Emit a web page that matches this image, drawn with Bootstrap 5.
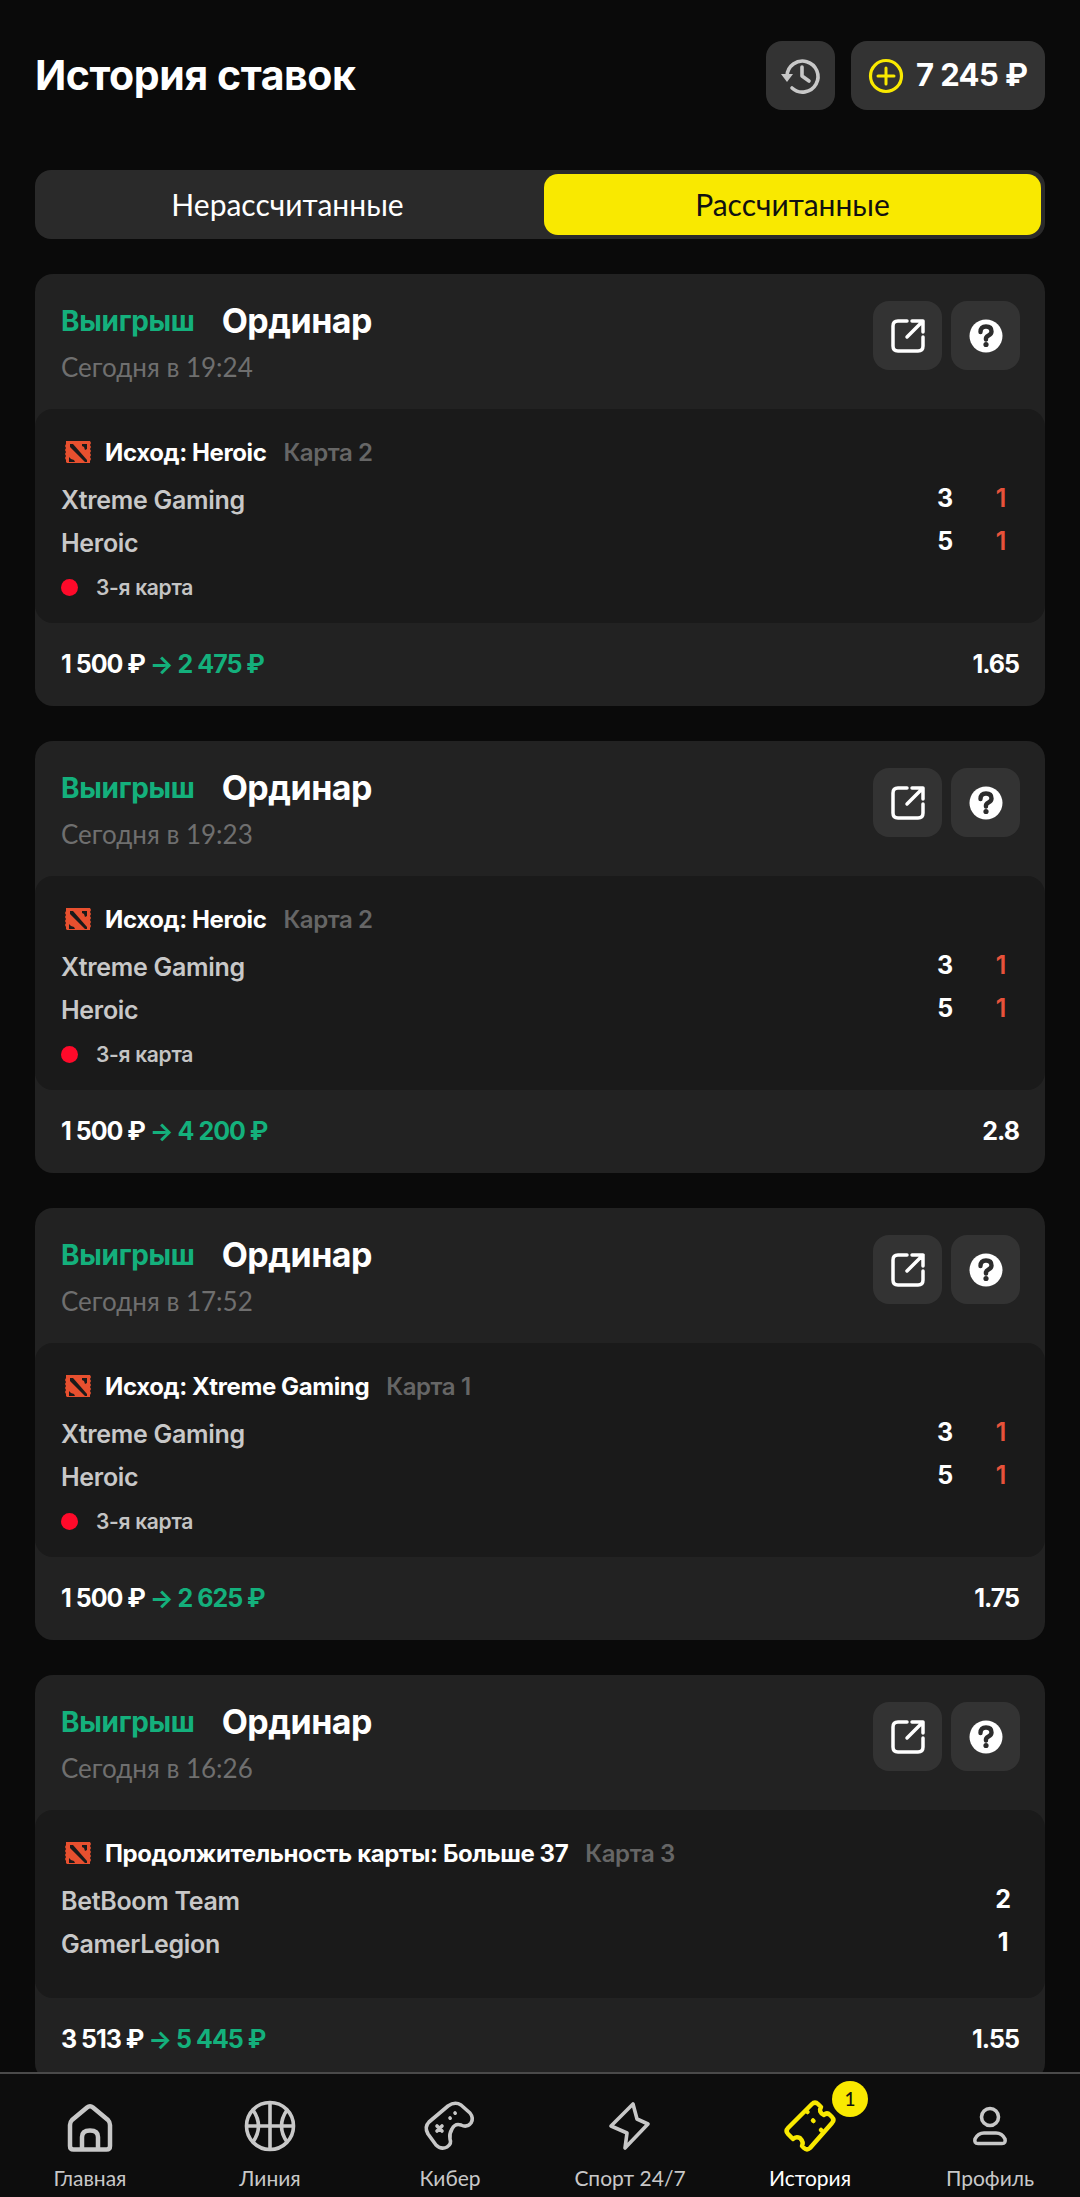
<!DOCTYPE html>
<html lang="ru">
<head>
  <meta charset="UTF-8" />
  <meta name="viewport" content="width=device-width, initial-scale=1.0" />
  <title>История ставок</title>
  <link href="https://cdn.jsdelivr.net/npm/bootstrap@5.3.0/dist/css/bootstrap.min.css" rel="stylesheet" />
  <style>
    body { background: #0a0a0a; color: #fff; font-family: "Inter", "Noto Sans", sans-serif; height: 2197px; overflow: hidden; }
    .page-wrap { padding: 41px 35px 0; }
    .page-title { font-size: 41px; font-weight: 700; letter-spacing: -.4px; line-height: 69px; margin: 0; }
    .square-btn { width: 69px; height: 69px; background: #333; border: 0; border-radius: 16px; padding: 0; }
    .square-btn:hover, .square-btn:active { background: #333 !important; }
    .balance-btn { height: 69px; width: 194px; background: #333; border: 0; border-radius: 16px; color: #fff; font-size: 31px; font-weight: 700; padding: 0 0 0 17px; gap: 12px; letter-spacing: -.6px; }
    .balance-btn:hover { background: #333; color: #fff; }
    .tab-bar { margin-top: 60px; height: 69px; background: #2a2a2a; border-radius: 16px; padding: 4px; gap: 8px; }
    .tab-btn { flex: 1 1 0; border: 0; border-radius: 14px; font-family: "Lato", "Noto Sans", sans-serif; font-size: 30px; color: #fff; padding: 0; }
    .tab-btn.is-active { background: #f9e900; color: #111; }
    .bet-card { background: #222; border: 0; border-radius: 18px; margin-top: 35px; color: #fff; }
    .bet-head { height: 135px; padding: 27px 25px 0 26px; }
    .bet-status { color: #14b07c; font-size: 28px; font-weight: 700; letter-spacing: -.3px; line-height: 40px; margin-right: 27px; }
    .bet-type { font-size: 34px; font-weight: 700; letter-spacing: -.5px; line-height: 40px; }
    .bet-date { font-family: "Lato", "Noto Sans", sans-serif; font-size: 26px; color: #6f6f6f; line-height: 34px; margin-top: 9px; }
    .head-actions { gap: 9px; }
    .bet-body { background: #1a1a1a; border-radius: 18px; padding: 27px 26px 11px; }
    .bet-body.no-map { padding-bottom: 32px; }
    .market-row { height: 34px; font-size: 24px; font-weight: 700; letter-spacing: -.4px; padding-left: 4px; }
    .market-row svg { margin-right: 14px; }
    .market-map { color: #666; font-weight: 600; margin-left: 17px; }
    .team-row { height: 43px; font-size: 25px; font-weight: 600; letter-spacing: -.3px; color: #c8c8c8; padding-right: 6px; }
    .teams { padding-top: 9px; }
    .score { width: 20px; text-align: center; color: #fff; font-weight: 700; margin-bottom: 3px; }
    .score-live { color: #e8523a; font-weight: 600; margin-left: 36px; margin-right: 2px; }
    .map-row { height: 47px; font-size: 21px; font-weight: 600; letter-spacing: -.3px; color: #c4c4c4; gap: 18px; padding-bottom: 2px; }
    .live-dot { width: 17px; height: 17px; border-radius: 50%; background: #ff0a2a; }
    .bet-foot { height: 83px; padding: 0 26px; font-size: 25px; font-weight: 700; letter-spacing: -1px; }
    .win-sum { color: #14b07c; }
    .tab-nav { height: 125px; background: #0d0d0d; border-top: 2px solid #4a4a4a; }
    .tab-item { width: 180px; padding-top: 22px; color: #c8c8c8; font-family: "Lato", "Noto Sans", sans-serif; font-size: 21px; line-height: 24px; position: relative; }
    .tab-item.is-current { color: #fff; }
    .tab-item svg { margin-bottom: 10px; }
    .nav-badge { position: absolute; top: 7px; left: 112px; width: 36px; height: 36px; border-radius: 50%; background: #f9e900; color: #111; font-size: 19px; font-weight: 500; line-height: 36px; text-align: center; }
    .ic { fill: none; stroke: #c8c8c8; stroke-width: 4.5; stroke-linecap: round; stroke-linejoin: round; }
    .ic-thin { stroke-width: 3.6; }
    .ic-active { stroke: #f9e900; }
  </style>
</head>
<body>
  <svg width="0" height="0" class="position-absolute">
    <symbol id="i-dota" viewBox="0 0 26 24">
      <path fill="#e8502f" d="M1 0h24l1 2-1 2 1 2-1 2 1 2-1 2 1 2-1 2 1 2-1 2 0 2H2l-1-1 0-2-1-2 1-2-1-2 1-2-1-2 1-2-1-2 1-2Z"/>
      <path fill="#1a1a1a" d="M5 3h3l14 16v2h-2L5 6ZM17 3h5v5l-2 1-1-3-2-1ZM4 16l2 2 3 1 1 2H4Z"/>
    </symbol>
    <symbol id="i-share" viewBox="0 0 40 40">
      <path fill="none" stroke="#fff" stroke-width="3.5" stroke-linecap="round" stroke-linejoin="round" d="M19 5H10Q5 5 5 10V30Q5 35 10 35H30Q35 35 35 30V21M19 21L35 5M24 5H35V16"/>
    </symbol>
    <symbol id="i-help" viewBox="0 0 40 40">
      <circle cx="20" cy="20" r="16.5" fill="#fff"/>
      <path fill="none" stroke="#2c2c2c" stroke-width="4.4" stroke-linecap="round" stroke-linejoin="round" d="M14.5 16Q14.5 10.5 20 10.5T25.5 15.5Q25.5 18 22.5 19.5T20 23.5"/>
      <circle cx="20" cy="28.5" r="2.6" fill="#2c2c2c"/>
    </symbol>
  </svg>

  <main class="page-wrap">
    <header class="d-flex justify-content-between align-items-center">
      <h1 class="page-title">История ставок</h1>
      <div class="d-flex" style="gap:16px">
        <button class="btn square-btn d-flex align-items-center justify-content-center" aria-label="История">
          <svg width="42" height="42" viewBox="0 0 42 42"><path fill="none" stroke="#c8c8c8" stroke-width="3.6" stroke-linecap="round" stroke-linejoin="round" d="M7 21A15.5 15.5 0 1 1 12 33M22 12V21L29 26"/><path fill="#c8c8c8" d="M1 19H13L7 27Z"/></svg>
        </button>
        <button class="btn balance-btn d-flex align-items-center">
          <svg width="36" height="36" viewBox="0 0 36 36"><circle cx="18" cy="18" r="15.5" fill="none" stroke="#f9e900" stroke-width="3.2"/><path fill="none" stroke="#f9e900" stroke-width="3" stroke-linecap="round" d="M18 10V26M10 18H26"/></svg>
          <span>7 245 ₽</span>
        </button>
      </div>
    </header>

    <div class="tab-bar d-flex">
      <button class="btn tab-btn">Нерассчитанные</button>
      <button class="btn tab-btn is-active">Рассчитанные</button>
    </div>

    <!-- Ставка 1 -->
    <section class="card bet-card">
      <div class="bet-head d-flex justify-content-between">
        <div>
          <div class="d-flex"><span class="bet-status">Выигрыш</span><span class="bet-type">Ординар</span></div>
          <div class="bet-date">Сегодня в 19:24</div>
        </div>
        <div class="d-flex head-actions">
          <button class="btn square-btn d-flex align-items-center justify-content-center" aria-label="Поделиться"><svg width="40" height="40"><use href="#i-share"/></svg></button>
          <button class="btn square-btn d-flex align-items-center justify-content-center" aria-label="Справка"><svg width="40" height="40"><use href="#i-help"/></svg></button>
        </div>
      </div>
      <div class="bet-body">
        <div class="market-row d-flex align-items-center"><svg width="26" height="24"><use href="#i-dota"/></svg>Исход: Heroic<span class="market-map">Карта 2</span></div>
        <div class="teams">
          <div class="team-row d-flex align-items-center"><span class="flex-grow-1">Xtreme Gaming</span><span class="score">3</span><span class="score score-live">1</span></div>
          <div class="team-row d-flex align-items-center"><span class="flex-grow-1">Heroic</span><span class="score">5</span><span class="score score-live">1</span></div>
        </div>
        <div class="map-row d-flex align-items-center"><span class="live-dot"></span>3-я карта</div>
      </div>
      <div class="bet-foot d-flex justify-content-between align-items-center"><span>1 500 ₽ <span class="win-sum">→ 2 475 ₽</span></span><span>1.65</span></div>
    </section>

    <!-- Ставка 2 -->
    <section class="card bet-card">
      <div class="bet-head d-flex justify-content-between">
        <div>
          <div class="d-flex"><span class="bet-status">Выигрыш</span><span class="bet-type">Ординар</span></div>
          <div class="bet-date">Сегодня в 19:23</div>
        </div>
        <div class="d-flex head-actions">
          <button class="btn square-btn d-flex align-items-center justify-content-center" aria-label="Поделиться"><svg width="40" height="40"><use href="#i-share"/></svg></button>
          <button class="btn square-btn d-flex align-items-center justify-content-center" aria-label="Справка"><svg width="40" height="40"><use href="#i-help"/></svg></button>
        </div>
      </div>
      <div class="bet-body">
        <div class="market-row d-flex align-items-center"><svg width="26" height="24"><use href="#i-dota"/></svg>Исход: Heroic<span class="market-map">Карта 2</span></div>
        <div class="teams">
          <div class="team-row d-flex align-items-center"><span class="flex-grow-1">Xtreme Gaming</span><span class="score">3</span><span class="score score-live">1</span></div>
          <div class="team-row d-flex align-items-center"><span class="flex-grow-1">Heroic</span><span class="score">5</span><span class="score score-live">1</span></div>
        </div>
        <div class="map-row d-flex align-items-center"><span class="live-dot"></span>3-я карта</div>
      </div>
      <div class="bet-foot d-flex justify-content-between align-items-center"><span>1 500 ₽ <span class="win-sum">→ 4 200 ₽</span></span><span>2.8</span></div>
    </section>

    <!-- Ставка 3 -->
    <section class="card bet-card">
      <div class="bet-head d-flex justify-content-between">
        <div>
          <div class="d-flex"><span class="bet-status">Выигрыш</span><span class="bet-type">Ординар</span></div>
          <div class="bet-date">Сегодня в 17:52</div>
        </div>
        <div class="d-flex head-actions">
          <button class="btn square-btn d-flex align-items-center justify-content-center" aria-label="Поделиться"><svg width="40" height="40"><use href="#i-share"/></svg></button>
          <button class="btn square-btn d-flex align-items-center justify-content-center" aria-label="Справка"><svg width="40" height="40"><use href="#i-help"/></svg></button>
        </div>
      </div>
      <div class="bet-body">
        <div class="market-row d-flex align-items-center"><svg width="26" height="24"><use href="#i-dota"/></svg>Исход: Xtreme Gaming<span class="market-map">Карта 1</span></div>
        <div class="teams">
          <div class="team-row d-flex align-items-center"><span class="flex-grow-1">Xtreme Gaming</span><span class="score">3</span><span class="score score-live">1</span></div>
          <div class="team-row d-flex align-items-center"><span class="flex-grow-1">Heroic</span><span class="score">5</span><span class="score score-live">1</span></div>
        </div>
        <div class="map-row d-flex align-items-center"><span class="live-dot"></span>3-я карта</div>
      </div>
      <div class="bet-foot d-flex justify-content-between align-items-center"><span>1 500 ₽ <span class="win-sum">→ 2 625 ₽</span></span><span>1.75</span></div>
    </section>

    <!-- Ставка 4 -->
    <section class="card bet-card">
      <div class="bet-head d-flex justify-content-between">
        <div>
          <div class="d-flex"><span class="bet-status">Выигрыш</span><span class="bet-type">Ординар</span></div>
          <div class="bet-date">Сегодня в 16:26</div>
        </div>
        <div class="d-flex head-actions">
          <button class="btn square-btn d-flex align-items-center justify-content-center" aria-label="Поделиться"><svg width="40" height="40"><use href="#i-share"/></svg></button>
          <button class="btn square-btn d-flex align-items-center justify-content-center" aria-label="Справка"><svg width="40" height="40"><use href="#i-help"/></svg></button>
        </div>
      </div>
      <div class="bet-body no-map">
        <div class="market-row d-flex align-items-center"><svg width="26" height="24"><use href="#i-dota"/></svg>Продолжительность карты: Больше 37<span class="market-map">Карта 3</span></div>
        <div class="teams">
          <div class="team-row d-flex align-items-center"><span class="flex-grow-1">BetBoom Team</span><span class="score">2</span></div>
          <div class="team-row d-flex align-items-center"><span class="flex-grow-1">GamerLegion</span><span class="score">1</span></div>
        </div>
      </div>
      <div class="bet-foot d-flex justify-content-between align-items-center"><span>3 513 ₽ <span class="win-sum">→ 5 445 ₽</span></span><span>1.55</span></div>
    </section>
  </main>

  <nav class="tab-nav fixed-bottom d-flex">
    <a class="tab-item text-decoration-none d-flex flex-column align-items-center">
      <svg class="ic" width="60" height="60" viewBox="0 0 60 60"><path d="M27 11.5Q30 9 33 11.5L48 24Q50 26 50 29V50Q50 53.5 46.5 53.5H13.5Q10 53.5 10 50V29Q10 26 12 24ZM22 53V41Q22 34.5 30 34.5T38 41V53"/></svg>
      Главная
    </a>
    <a class="tab-item text-decoration-none d-flex flex-column align-items-center">
      <svg class="ic ic-thin" width="60" height="60" viewBox="0 0 60 60"><circle cx="30" cy="30" r="23.5"/><path d="M30 7V53M7 30H53M13 14Q24 30 13 46M47 14Q36 30 47 46"/></svg>
      Линия
    </a>
    <a class="tab-item text-decoration-none d-flex flex-column align-items-center">
      <svg class="ic ic-thin" width="60" height="60" viewBox="0 0 60 60"><path d="M9 26L28 10Q35 5 41 9L50 17Q54 22 51 27Q47 32 41 29Q35 27 32 33Q29 38 30 43Q32 48 27 51Q21 54 16 49L8 38Q4 31 9 26ZM17 30L22 35M22 30L17 35M35 17L35.2 17.2M30 22L30.2 22.2"/></svg>
      Кибер
    </a>
    <a class="tab-item text-decoration-none d-flex flex-column align-items-center">
      <svg class="ic ic-thin" width="60" height="60" viewBox="0 0 60 60"><path d="M33 8L37 23L48 28L25 52L27 37L11 30Z"/></svg>
      Спорт 24/7
    </a>
    <a class="tab-item is-current text-decoration-none d-flex flex-column align-items-center">
      <svg class="ic ic-active" width="60" height="60" viewBox="0 0 60 60"><path d="M32 8Q35 5 38 8L41 11Q38 16 44 19Q47 16 50 19L52 21Q55 24 52 27L30 52Q27 55 24 52L22 50Q24 46 20 42Q16 40 13 43L8 38Q5 35 8 32ZM27 15.5L27.5 16M33 24.5L33.5 25M41 34L41.5 34.5"/></svg>
      История
      <span class="nav-badge">1</span>
    </a>
    <a class="tab-item text-decoration-none d-flex flex-column align-items-center">
      <svg class="ic ic-thin" width="60" height="60" viewBox="0 0 60 60"><circle cx="30" cy="21" r="8.5"/><path d="M18 47.5H42Q46 47.5 45 43Q42 37 36 37H24Q18 37 15 43Q14 47.5 18 47.5Z"/></svg>
      Профиль
    </a>
  </nav>

  <script src="https://cdn.jsdelivr.net/npm/bootstrap@5.3.0/dist/js/bootstrap.bundle.min.js"></script>
</body>
</html>
